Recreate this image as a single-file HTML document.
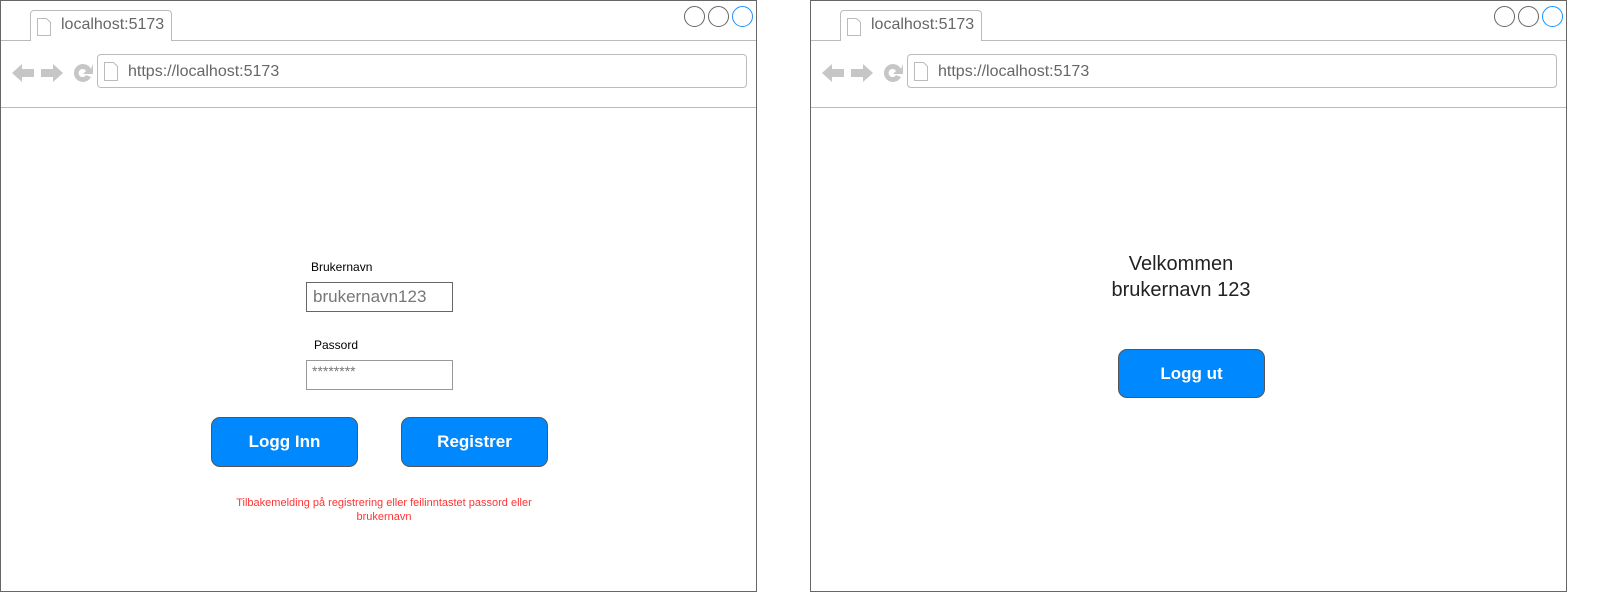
<!DOCTYPE html>
<html><head><meta charset="utf-8"><style>
body{margin:0;width:1617px;height:611px;background:#fff;position:relative;overflow:hidden;font-family:"Liberation Sans",Arial,sans-serif}
.f{position:absolute;top:0;width:755px;height:590px;border:1px solid #666;box-sizing:content-box}
.a{position:absolute}
.tab{left:29px;top:9px;width:140px;height:30px;border:1px solid #bbb;border-bottom:none;border-radius:4px 4px 0 0;background:#fff;font-size:16px;color:#666}
.l1{left:0;right:0;top:39px;border-top:1px solid #bbb}
.l2{left:0;right:0;top:106px;border-top:1px solid #bbb}
.url{left:96px;top:53px;width:650px;height:34px;border:1px solid #bbb;border-radius:4px;box-sizing:border-box;font-size:16px;color:#666}
.c{width:19px;height:19px;border:1px solid #666;border-radius:50%;top:5px}
.btn{background:#0088ff;border:1px solid #555;border-radius:9px;color:#fff;font-weight:bold;font-size:17px;text-align:center;box-sizing:border-box;width:147px;height:50px;line-height:48px}
.inp{border:1px solid #666;box-sizing:border-box;width:147px;height:30px;color:#777}
</style></head><body>
<div class="f" style="left:0">
 <div class="a l1"></div>
 <div class="a tab"><svg class="a" style="left:6px;top:7px" width="14" height="18" viewBox="0 0 14 18"><path d="M0.5 0.5H9.5L13.5 4.5V17.5H0.5Z" fill="none" stroke="#bbb"/></svg><span class="a" style="left:30px;top:5px">localhost:5173</span></div>
 <div class="a" style="left:683px"><div class="a c" style="left:0"></div><div class="a c" style="left:24px"></div><div class="a c" style="left:48px;border-color:#1e90ff"></div></div>
 <svg class="a" style="left:10px;top:60px" width="86" height="24" viewBox="0 0 86 24"><path d="M1 12L11 3V8H23V16H11V21Z" fill="#c6c6c6"/><path d="M52 12L42 3V8H30V16H42V21Z" fill="#c6c6c6"/><path d="M80 8A9 9 0 1 0 80 16L75 14A4 4 0 1 1 75 10L72 13H82V3Z" fill="#c6c6c6"/></svg>
 <div class="a url"><svg class="a" style="left:6px;top:7px" width="14" height="19" viewBox="0 0 14 19"><path d="M0.5 0.5H9.5L13.5 4.5V18.5H0.5Z" fill="none" stroke="#bbb"/></svg><span class="a" style="left:30px;top:8px">https://localhost:5173</span></div>
 <div class="a l2"></div>
 <div class="a" style="left:310px;top:259px;font-size:12px">Brukernavn</div>
 <div class="a inp" style="left:305px;top:281px;font-size:17px;padding:4px 6px">brukernavn123</div>
 <div class="a" style="left:313px;top:337px;font-size:12px">Passord</div>
 <div class="a inp" style="left:305px;top:359px;border-color:#999;font-size:14px;padding:2px 5px">********</div>
 <div class="a btn" style="left:210px;top:416px">Logg Inn</div>
 <div class="a btn" style="left:400px;top:416px">Registrer</div>
 <div class="a" style="left:218px;width:330px;top:495px;font-size:11px;color:#ff3333;text-align:center;line-height:14px">Tilbakemelding på registrering eller feilinntastet passord eller brukernavn</div>
</div>
<div class="f" style="left:810px">
 <div class="a l1"></div>
 <div class="a tab"><svg class="a" style="left:6px;top:7px" width="14" height="18" viewBox="0 0 14 18"><path d="M0.5 0.5H9.5L13.5 4.5V17.5H0.5Z" fill="none" stroke="#bbb"/></svg><span class="a" style="left:30px;top:5px">localhost:5173</span></div>
 <div class="a" style="left:683px"><div class="a c" style="left:0"></div><div class="a c" style="left:24px"></div><div class="a c" style="left:48px;border-color:#1e90ff"></div></div>
 <svg class="a" style="left:10px;top:60px" width="86" height="24" viewBox="0 0 86 24"><path d="M1 12L11 3V8H23V16H11V21Z" fill="#c6c6c6"/><path d="M52 12L42 3V8H30V16H42V21Z" fill="#c6c6c6"/><path d="M80 8A9 9 0 1 0 80 16L75 14A4 4 0 1 1 75 10L72 13H82V3Z" fill="#c6c6c6"/></svg>
 <div class="a url"><svg class="a" style="left:6px;top:7px" width="14" height="19" viewBox="0 0 14 19"><path d="M0.5 0.5H9.5L13.5 4.5V18.5H0.5Z" fill="none" stroke="#bbb"/></svg><span class="a" style="left:30px;top:8px">https://localhost:5173</span></div>
 <div class="a l2"></div>
 <div class="a" style="left:250px;width:240px;top:250px;font-size:20px;color:#222;text-align:center;line-height:26px">Velkommen<br>brukernavn 123</div>
 <div class="a btn" style="left:307px;top:348px;height:49px">Logg ut</div>
</div>
</body></html>
